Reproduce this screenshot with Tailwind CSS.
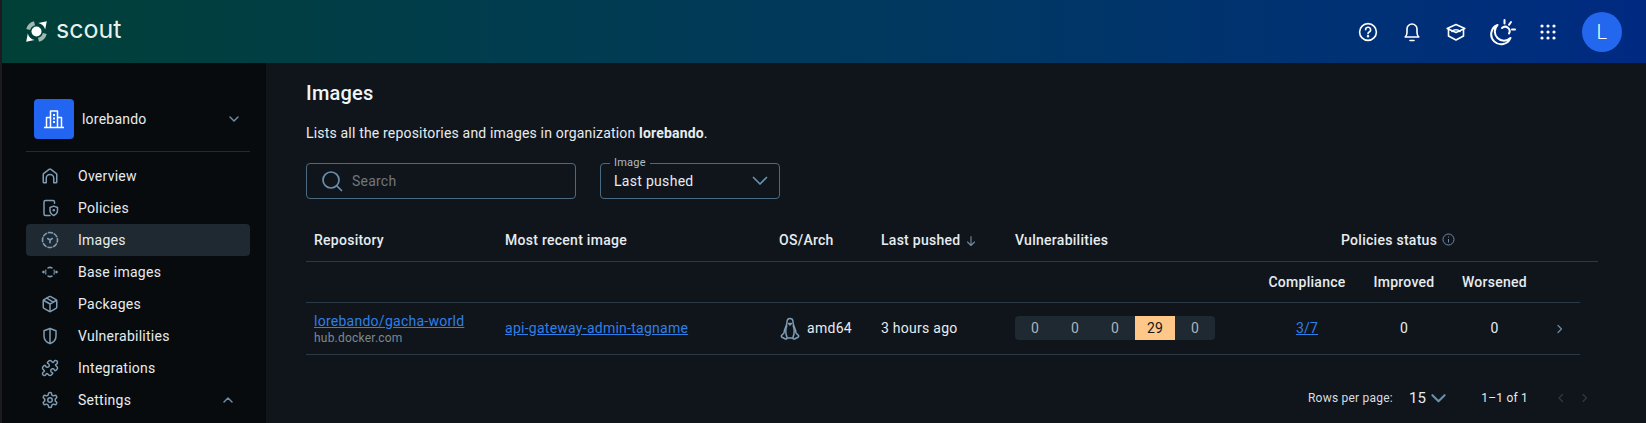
<!DOCTYPE html>
<html lang="en">
<head>
    <meta charset="UTF-8">
    <title>Images - Scout</title>
    <script src="https://cdn.jsdelivr.net/npm/@tailwindcss/browser@4"></script>
</head>
<body class="bg-[#10151c] h-[423px] overflow-hidden font-['Roboto',sans-serif] text-[14px] text-[#e7ecef] tracking-[0.22px]">
    <div class="flex h-[423px]">
        <div class="w-[2px] shrink-0 bg-[#1c1c20]"></div>
        <div class="flex-1 flex flex-col min-w-0">
            <!-- Header -->
            <header class="h-[63px] shrink-0 flex items-center justify-between bg-gradient-to-r from-[#014036] via-[#00395c] to-[#002a82] pl-[24px] pr-[24px]">
                <div class="flex items-center gap-[9px]">
                    <svg width="21" height="21" viewBox="0 0 21 21">
                        <path d="M2.200 8.500A8.700 8.700 0 0 1 8.500 2.200" stroke="#9fb8b2" stroke-width="4" fill="none"/>
                        <path d="M18.800 12.500A8.700 8.700 0 0 1 12.500 18.800" stroke="#9fb8b2" stroke-width="4" fill="none"/>
                        <circle cx="10.500" cy="10.500" r="5" fill="#fff"/>
                        <path d="M20.800 .2 19.200 8.600A9.500 9.500 0 0 0 12.400 1.900Z" fill="#fff"/>
                        <path d="M.2 20.800 1.800 12.400A9.500 9.500 0 0 0 8.600 19.100Z" fill="#fff"/>
                    </svg>
                    <span class="font-['Inter',sans-serif] text-[25px] leading-none text-[#e9f1ef] tracking-[0px] -mt-[4px]">scout</span>
                </div>
                <div class="flex items-center text-white">
                    <div class="w-[44px] flex justify-center">
                        <svg width="20" height="20" viewBox="0 0 20 20" fill="none" stroke="currentColor" stroke-width="1.600" stroke-linecap="round"><circle cx="10" cy="10" r="8.400"/><path d="M7.600 7.800a2.500 2.500 0 1 1 3.600 2.200c-.8.4-1.200.9-1.200 1.700"/><circle cx="10" cy="14.300" r=".5" fill="currentColor"/></svg>
                    </div>
                    <div class="w-[44px] flex justify-center">
                        <svg width="20" height="20" viewBox="0 0 20 20" fill="none" stroke="currentColor" stroke-width="1.600" stroke-linecap="round" stroke-linejoin="round"><path d="M3.200 15h13.600c-1.200-1.200-1.800-2.500-1.800-4.600V7a5 5 0 0 0-10 0v3.400c0 2.100-.6 3.400-1.800 4.600Z"/><path d="M8 18.500h4"/></svg>
                    </div>
                    <div class="w-[44px] flex justify-center">
                        <svg width="20" height="20" viewBox="0 0 20 20" fill="none" stroke="currentColor" stroke-width="1.600" stroke-linecap="round" stroke-linejoin="round"><path d="M1.200 6.500 10 2.500l8.800 4-8.800 4Z"/><path d="M2.500 7.500V14L10 18l7.500-4V7.500"/><path d="M6 9.500c1-1 2.600-1.700 4-1.700s3 .7 4 1.700"/></svg>
                    </div>
                    <div class="w-[48px] flex justify-center">
                        <svg width="28" height="28" viewBox="0 0 28 28" fill="none" stroke="currentColor" stroke-width="2" stroke-linecap="round" stroke-linejoin="round"><path d="M9.500 7a10 10 0 1 0 13 13 8 8 0 0 1-13-13Z"/><path d="M14 10a4.500 4.500 0 0 1 7 5.500"/><path d="M16.500 2v3.500M23 4l-2 2.800M27 11.500h-3"/></svg>
                    </div>
                    <div class="w-[44px] flex justify-center">
                        <svg width="16" height="16" viewBox="0 0 16 16" fill="currentColor"><circle cx="2" cy="2" r="1.600"/><circle cx="8" cy="2" r="1.600"/><circle cx="14" cy="2" r="1.600"/><circle cx="2" cy="8" r="1.600"/><circle cx="8" cy="8" r="1.600"/><circle cx="14" cy="8" r="1.600"/><circle cx="2" cy="14" r="1.600"/><circle cx="8" cy="14" r="1.600"/><circle cx="14" cy="14" r="1.600"/></svg>
                    </div>
                    <div class="ml-[12px] w-[40px] h-[40px] rounded-full bg-[#2467ef] flex items-center justify-center text-[20px] font-light text-white">L</div>
                </div>
            </header>
            <div class="flex-1 flex min-h-0">
                <!-- Sidebar -->
                <aside class="w-[264px] shrink-0 bg-[#080b0e] pl-[24px] pr-[16px] pt-[36px]">
                    <div class="flex items-center h-[40px] pl-[8px] pr-[10px]">
                        <div class="w-[40px] h-[40px] rounded-[4px] bg-[#2265f0] flex items-center justify-center">
                            <svg width="24" height="24" viewBox="0 0 24 24" fill="none" stroke="#fff" stroke-width="1.500" stroke-linejoin="round"><path d="M2 20.500h20"/><path d="M8.500 20.500V4h7v16.500"/><path d="M8.500 10.500H4.500v10M15.500 10.500h4v10"/><path d="M11 8h2M11 11.500h2M11 15h2" stroke-width="1.800"/></svg>
                        </div>
                        <span class="ml-[8px] flex-1">lorebando</span>
                        <svg width="12" height="12" viewBox="0 0 12 12" fill="none" stroke="#6f8ba3" stroke-width="1.500" stroke-linecap="round" stroke-linejoin="round"><path d="M2 4l4 4 4-4"/></svg>
                    </div>
                    <div class="h-px bg-[#252b31] mt-[12px] mb-[8px]"></div>
                    <nav class="text-[14px] tracking-[0.26px]">
                        <a class="flex items-center h-[32px] pl-[15px] rounded-[4px]">
                            <svg class="w-[18px] h-[18px] mr-[19px]" viewBox="0 0 24 24" fill="none" stroke="#7e9cb4" stroke-width="2" stroke-linecap="round" stroke-linejoin="round"><path d="M4 21a1 1 0 0 1-1-1V10a2 2 0 0 1 .8-1.600l7-5.200a2 2 0 0 1 2.400 0l7 5.200A2 2 0 0 1 21 10v10a1 1 0 0 1-1 1h-3v-6a5 5 0 0 0-10 0v6Z"/></svg>
                            Overview
                        </a>
                        <a class="flex items-center h-[32px] pl-[15px] rounded-[4px]">
                            <svg class="w-[18px] h-[18px] mr-[19px]" viewBox="0 0 24 24" fill="none" stroke="#7e9cb4" stroke-width="2" stroke-linecap="round" stroke-linejoin="round"><path d="M18 5.500V4a2 2 0 0 0-2-2H6a2 2 0 0 0-2 2v16a2 2 0 0 0 2 2h6"/><path d="M17 9.500l5 1.800v4c0 3.200-2.200 5.400-5 6.700-2.800-1.300-5-3.500-5-6.700v-4Z"/><circle cx="17" cy="15" r=".8"/></svg>
                            Policies
                        </a>
                        <a class="flex items-center h-[32px] pl-[15px] rounded-[4px] bg-[#1e2931]">
                            <svg class="w-[18px] h-[18px] mr-[19px]" viewBox="0 0 24 24" fill="none" stroke="#7e9cb4" stroke-width="2.200" stroke-linecap="round" stroke-linejoin="round"><circle cx="12" cy="12" r="10" stroke-dasharray="5 2.900" stroke-dashoffset="2.500"/><path d="M9 10l3 2 3-2M12 12v3.500"/></svg>
                            Images
                        </a>
                        <a class="flex items-center h-[32px] pl-[15px] rounded-[4px]">
                            <svg class="w-[18px] h-[18px] mr-[19px]" viewBox="0 0 24 24" fill="none" stroke="#7e9cb4" stroke-width="2.200" stroke-linecap="round" stroke-linejoin="round"><path d="M9.500 6.500a6 6 0 0 1 5 0M14.500 17.500a6 6 0 0 1-5 0"/><path d="M17.500 9.500a6 6 0 0 1 0 5M6.500 14.500a6 6 0 0 1 0-5" opacity=".7"/><path d="M2.500 12l1.200-.8v1.600ZM21.500 12l-1.200-.8v1.600Z" fill="#7e9cb4"/></svg>
                            Base images
                        </a>
                        <a class="flex items-center h-[32px] pl-[15px] rounded-[4px]">
                            <svg class="w-[18px] h-[18px] mr-[19px]" viewBox="0 0 24 24" fill="none" stroke="#7e9cb4" stroke-width="2" stroke-linecap="round" stroke-linejoin="round"><path d="M21 8a2 2 0 0 0-1-1.730l-7-4a2 2 0 0 0-2 0l-7 4A2 2 0 0 0 3 8v8a2 2 0 0 0 1 1.730l7 4a2 2 0 0 0 2 0l7-4A2 2 0 0 0 21 16Z"/><path d="m3.300 7 8.700 5 8.700-5M12 22V12M7.500 4.300l9 5.200"/></svg>
                            Packages
                        </a>
                        <a class="flex items-center h-[32px] pl-[15px] rounded-[4px]">
                            <svg class="w-[18px] h-[18px] mr-[19px]" viewBox="0 0 24 24" fill="none" stroke="#7e9cb4" stroke-width="2" stroke-linecap="round" stroke-linejoin="round"><path d="M12 2l8 3v7c0 5-3.500 8.500-8 10-4.500-1.500-8-5-8-10V5Z"/><path d="M12 2v20"/></svg>
                            Vulnerabilities
                        </a>
                        <a class="flex items-center h-[32px] pl-[15px] rounded-[4px]">
                            <svg class="w-[18px] h-[18px] mr-[19px]" viewBox="0 0 24 24" fill="none" stroke="#7e9cb4" stroke-width="2" stroke-linecap="round" stroke-linejoin="round"><path d="M19.439 7.850c-.049.322.059.648.289.878l1.568 1.568c.47.47.706 1.087.706 1.704s-.235 1.233-.706 1.704l-1.611 1.611a.98.98 0 0 1-.837.276c-.47-.07-.802-.48-.968-.925a2.501 2.501 0 1 0-3.214 3.214c.446.166.855.497.925.968a.979.979 0 0 1-.276.837l-1.610 1.610a2.404 2.404 0 0 1-1.705.707 2.402 2.402 0 0 1-1.704-.706l-1.568-1.568a1.026 1.026 0 0 0-.877-.29c-.493.074-.84.504-1.020.968a2.500 2.500 0 1 1-3.237-3.237c.464-.18.894-.527.967-1.020a1.026 1.026 0 0 0-.289-.877l-1.568-1.568A2.402 2.402 0 0 1 1.998 12c0-.617.236-1.234.706-1.704L4.230 8.770c.24-.24.581-.353.917-.303.515.077.877.528 1.073 1.010a2.500 2.500 0 1 0 3.259-3.259c-.482-.196-.933-.558-1.010-1.073-.05-.336.062-.676.303-.917l1.525-1.525A2.402 2.402 0 0 1 12 1.998c.617 0 1.234.236 1.704.706l1.568 1.568c.23.23.556.338.877.29.493-.074.84-.504 1.020-.968a2.500 2.500 0 1 1 3.237 3.237c-.464.18-.894.527-.967 1.020Z"/></svg>
                            Integrations
                        </a>
                        <a class="flex items-center h-[32px] pl-[15px] rounded-[4px]">
                            <svg class="w-[18px] h-[18px] mr-[19px]" viewBox="0 0 24 24" fill="none" stroke="#7e9cb4" stroke-width="2" stroke-linecap="round" stroke-linejoin="round"><path d="M12.220 2h-.44a2 2 0 0 0-2 2v.18a2 2 0 0 1-1 1.730l-.43.25a2 2 0 0 1-2 0l-.15-.08a2 2 0 0 0-2.730.73l-.22.38a2 2 0 0 0 .73 2.730l.15.1a2 2 0 0 1 1 1.720v.51a2 2 0 0 1-1 1.740l-.15.09a2 2 0 0 0-.73 2.730l.22.38a2 2 0 0 0 2.730.73l.15-.08a2 2 0 0 1 2 0l.43.25a2 2 0 0 1 1 1.730V20a2 2 0 0 0 2 2h.44a2 2 0 0 0 2-2v-.18a2 2 0 0 1 1-1.730l.43-.25a2 2 0 0 1 2 0l.15.08a2 2 0 0 0 2.730-.73l.22-.39a2 2 0 0 0-.73-2.730l-.15-.08a2 2 0 0 1-1-1.740v-.5a2 2 0 0 1 1-1.740l.15-.09a2 2 0 0 0 .73-2.730l-.22-.38a2 2 0 0 0-2.730-.73l-.15.08a2 2 0 0 1-2 0l-.43-.25a2 2 0 0 1-1-1.730V4a2 2 0 0 0-2-2z"/><circle cx="12" cy="12" r="3"/></svg>
                            <span class="flex-1">Settings</span>
                            <svg class="mr-[16px]" width="12" height="12" viewBox="0 0 12 12" fill="none" stroke="#6f8ba3" stroke-width="1.500" stroke-linecap="round" stroke-linejoin="round"><path d="M2 8l4-4 4 4"/></svg>
                        </a>
                    </nav>
                </aside>
                <!-- Main -->
                <main class="flex-1 min-w-0 pl-[40px] pr-[48px] pt-[17px]">
                    <h1 class="text-[20px] leading-[26px] font-medium text-[#f2f5f7]">Images</h1>
                    <p class="mt-[17px] text-[14px] leading-[20px] tracking-[0.18px]">Lists all the repositories and images in organization <b class="font-bold">lorebando</b>.</p>
                    <div class="flex gap-[24px] mt-[20px]">
                        <div class="w-[270px] h-[36px] rounded-[4px] border border-[#4b6a82] flex items-center pl-[14px]">
                            <svg width="22" height="22" viewBox="0 0 22 22" fill="none" stroke="#6a90ac" stroke-width="1.700" stroke-linecap="round"><circle cx="10" cy="10" r="8"/><path d="M16 16l4.500 4.500"/></svg>
                            <span class="ml-[9px] text-[#70777d]">Search</span>
                        </div>
                        <div class="relative w-[180px] h-[36px] rounded-[4px] border border-[#4b6a82] flex items-center justify-between pl-[13px] pr-[11px]">
                            <span class="absolute -top-[7px] left-[9px] px-[4px] bg-[#10151c] text-[11px] leading-[12px] text-[#b4bcc2]">Image</span>
                            <span class="tracking-[0.3px]">Last pushed</span>
                            <svg width="16" height="16" viewBox="0 0 16 16" fill="none" stroke="#6a90ac" stroke-width="1.700" stroke-linecap="round" stroke-linejoin="round"><path d="M1.500 4.500 8 11l6.500-6.500"/></svg>
                        </div>
                    </div>
                    <!-- Table -->
                    <div class="mt-[21px]">
                        <div class="grid grid-cols-[191px_274px_102px_134px_254px_1fr] items-center h-[42px] border-b border-[#2b3a45] font-medium tracking-[0.27px]">
                            <div class="pl-[8px]">Repository</div>
                            <div class="pl-[8px]">Most recent image</div>
                            <div class="pl-[8px]">OS/Arch</div>
                            <div class="pl-[8px] flex items-center">Last pushed
                                <svg class="ml-[5px]" width="12" height="12" viewBox="0 0 12 12" fill="none" stroke="#6f8ba3" stroke-width="1.100" stroke-linecap="round" stroke-linejoin="round"><path d="M6 1.500v9M2.500 7 6 10.500 9.500 7"/></svg>
                            </div>
                            <div class="pl-[8px]">Vulnerabilities</div>
                            <div class="flex items-center pl-[80px]">Policies status
                                <svg class="ml-[5px] -mt-[3px]" width="13" height="13" viewBox="0 0 13 13" fill="none" stroke="#6f8ba3" stroke-width="1"><circle cx="6.500" cy="6.500" r="5.500"/><path d="M6.500 6v3.500M6.500 3.500v1"/></svg>
                            </div>
                        </div>
                        <div class="w-[1274px]">
                            <div class="grid grid-cols-[955px_92px_102px_79px_46px] items-center h-[41px] border-b border-[#2b3a45] font-medium tracking-[0.27px] text-center">
                                <div></div>
                                <div>Compliance</div>
                                <div>Improved</div>
                                <div>Worsened</div>
                                <div></div>
                            </div>
                            <div class="grid grid-cols-[191px_274px_102px_134px_254px_92px_102px_79px_46px] items-center h-[52px] border-b border-[#2b3a45]">
                                <div class="pl-[8px]">
                                    <a class="block underline text-[#2f7fe8] leading-[18px] tracking-[0.26px]">lorebando/gacha-world</a>
                                    <div class="text-[12px] leading-[16px] text-[#7a8892]">hub.docker.com</div>
                                </div>
                                <div class="pl-[8px]"><a class="underline text-[#2f7fe8] tracking-[0.26px]">api-gateway-admin-tagname</a></div>
                                <div class="pl-[9px] flex items-center gap-[7px] tracking-[0.3px]">
                                    <svg width="20" height="24" viewBox="0 0 20 24" fill="none" stroke="#7e9cb4" stroke-width="1.500" stroke-linejoin="round"><path d="M10 1.500c-2 0-3 1.500-3 3.500 0 2.500-.5 3.500-1.500 5.500S4 14 4 16l-2.500 2.500c-.5.800 0 1.500 1 2l3 1.500c1 .3 1.500-.3 1.700-1h5.600c.2.700.7 1.300 1.700 1l3-1.500c1-.5 1.500-1.200 1-2L16 16c0-2-.5-3.500-1.500-5.500S13 7.500 13 5c0-2-1-3.500-3-3.500Z"/><path d="M7 8.500c-1.500 3-1.500 8 .2 12.500M13 8.500c1.500 3 1.500 8-.2 12.500"/><path d="M8.500 6.500h3L10 8Z" fill="#7e9cb4"/></svg>
                                    amd64
                                </div>
                                <div class="pl-[8px] tracking-[0.26px]">3 hours ago</div>
                                <div class="pl-[8px]">
                                    <div class="flex w-[200px] h-[24px] -mt-[1px] rounded-[4px] overflow-hidden bg-[#1e2931] text-center leading-[25px] text-[#aab4bb]">
                                        <div class="w-[40px]">0</div>
                                        <div class="w-[40px]">0</div>
                                        <div class="w-[40px]">0</div>
                                        <div class="w-[40px] bg-[#ffc788] text-[#14181c]">29</div>
                                        <div class="w-[40px]">0</div>
                                    </div>
                                </div>
                                <div class="text-center"><a class="underline text-[#2f7fe8]">3/7</a></div>
                                <div class="text-center">0</div>
                                <div class="text-center">0</div>
                                <div class="flex justify-center pl-[6px]">
                                    <svg width="10" height="12" viewBox="0 0 10 12" fill="none" stroke="#6f8ba3" stroke-width="1.200" stroke-linecap="round" stroke-linejoin="round"><path d="M3 2.500 6.500 6 3 9.500"/></svg>
                                </div>
                            </div>
                        </div>
                        <div class="flex items-center h-[24px] mt-[31px] w-[1291px] pl-[1002px] text-[12px]">
                            <span class="text-[#d7dde1]">Rows per page:</span>
                            <span class="ml-[16px] text-[15px]">15</span>
                            <svg class="ml-[5px]" width="15" height="15" viewBox="0 0 16 16" fill="none" stroke="#6a90ac" stroke-width="2.200" stroke-linecap="round" stroke-linejoin="round"><path d="M1.500 4.500 8 11l6.500-6.500"/></svg>
                            <span class="ml-[35px]">1–1 of 1</span>
                            <svg class="ml-[28px]" width="10" height="12" viewBox="0 0 10 12" fill="none" stroke="#2c3a45" stroke-width="1.200" stroke-linecap="round" stroke-linejoin="round"><path d="M6.500 2.500 3 6l3.500 3.500"/></svg>
                            <svg class="ml-[14px]" width="10" height="12" viewBox="0 0 10 12" fill="none" stroke="#2c3a45" stroke-width="1.200" stroke-linecap="round" stroke-linejoin="round"><path d="M3 2.500 6.500 6 3 9.500"/></svg>
                        </div>
                    </div>
                </main>
            </div>
        </div>
    </div>
</body>
</html>
